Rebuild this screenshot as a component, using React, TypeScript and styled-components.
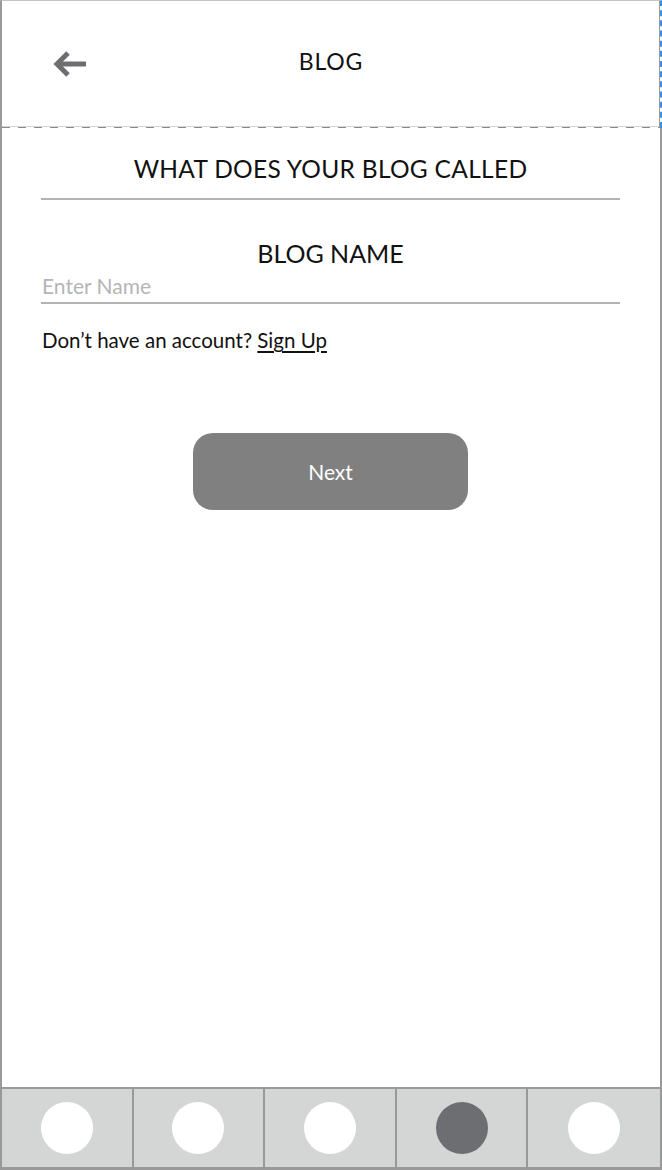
import styled, { createGlobalStyle } from "styled-components";

const GlobalStyle = createGlobalStyle`
  html, body {
    margin: 0;
    padding: 0;
    background: #ffffff;
  }
  * {
    box-sizing: border-box;
  }
`;

const Screen = styled.div`
  width: 662px;
  height: 1170px;
  display: flex;
  flex-direction: column;
  font-family: Lato, "Open Sans", sans-serif;
  color: #111111;
  background: #ffffff;
  overflow: hidden;
`;

const Header = styled.header`
  height: 128px;
  flex-shrink: 0;
  display: flex;
  align-items: center;
  justify-content: center;
  position: relative;
  border-top: 1px solid #c4c4c4;
  border-left: 2px solid #9a9a9a;
  border-right: 2px dashed #3a8ee6;
  background-color: #ffffff;
  background-image: linear-gradient(#d6d6d6, #d6d6d6),
    repeating-linear-gradient(to right, #8a8a8a 0 8px, transparent 8px 16px);
  background-size: 100% 1px, 100% 1px;
  background-position: left calc(100% - 1px), left bottom;
  background-repeat: no-repeat;
  box-shadow: inset -1px 0 0 #9a9a9a;
`;

const BackButton = styled.button`
  position: absolute;
  left: 49px;
  top: 47px;
  width: 38px;
  height: 32px;
  padding: 0;
  border: none;
  background: none;
  display: flex;
  align-items: center;
  justify-content: center;
`;

const Title = styled.h1`
  margin: 0;
  font-size: 23px;
  font-weight: 400;
  letter-spacing: 0.8px;
  transform: translateY(-4px);
`;

const Body = styled.main`
  flex: 1;
  display: flex;
  flex-direction: column;
  padding: 26px 40px 0 39px;
  border-left: 2px solid #9a9a9a;
  border-right: 2px solid #9a9a9a;
`;

const Question = styled.h2`
  margin: 0;
  padding-bottom: 15px;
  text-align: center;
  font-size: 24.5px;
  font-weight: 400;
  letter-spacing: 0.3px;
  border-bottom: 2px solid #b3b3b3;
`;

const FieldLabel = styled.h3`
  margin: 38px 0 0;
  text-align: center;
  font-size: 25px;
  font-weight: 400;
  line-height: 30px;
`;

const NameInput = styled.input`
  display: block;
  width: 100%;
  margin-top: 5px;
  padding: 0 0 4px 1px;
  border: none;
  border-bottom: 2px solid #b3b3b3;
  outline: none;
  background: transparent;
  font-family: inherit;
  font-size: 21px;
  color: #111111;
  &::placeholder {
    color: #b5b5b5;
  }
`;

const AccountLine = styled.p`
  margin: 24px 0 0 1px;
  font-size: 20.5px;
`;

const SignUp = styled.a`
  color: #111111;
  text-decoration: underline;
  text-underline-offset: 3px;
`;

const NextButton = styled.button`
  align-self: center;
  margin-top: 81px;
  width: 275px;
  height: 77px;
  border: none;
  border-radius: 20px;
  background: #808080;
  color: #ffffff;
  font-family: inherit;
  font-size: 21px;
`;

const TabBar = styled.nav`
  height: 83px;
  flex-shrink: 0;
  display: grid;
  grid-template-columns: repeat(5, 1fr);
  background: #d4d5d5;
  border: 2px solid #999999;
  border-bottom-width: 3px;
`;

const Tab = styled.div<{ $last?: boolean }>`
  display: flex;
  align-items: center;
  justify-content: center;
  border-right: ${(p) => (p.$last ? "none" : "2px solid #999999")};
`;

const Dot = styled.span<{ $active?: boolean }>`
  width: 52px;
  height: 52px;
  border-radius: 50%;
  background: ${(p) => (p.$active ? "#6d6e71" : "#ffffff")};
`;

const tabs = [false, false, false, true, false];

export default function App() {
  return (
    <>
      <GlobalStyle />
      <Screen>
        <Header>
          <BackButton aria-label="Back">
            <svg width="34" height="28" viewBox="0 0 34 28">
              <path
                d="M15 3 L4 14 L15 25"
                fill="none"
                stroke="#6d6e71"
                strokeWidth="5"
              />
              <path d="M5 14 H33" stroke="#6d6e71" strokeWidth="5" />
            </svg>
          </BackButton>
          <Title>BLOG</Title>
        </Header>
        <Body>
          <Question>WHAT DOES YOUR BLOG CALLED</Question>
          <FieldLabel>BLOG NAME</FieldLabel>
          <NameInput placeholder="Enter Name" />
          <AccountLine>
            Don’t have an account? <SignUp href="#">Sign Up</SignUp>
          </AccountLine>
          <NextButton>Next</NextButton>
        </Body>
        <TabBar>
          {tabs.map((active, i) => (
            <Tab key={i} $last={i === tabs.length - 1}>
              <Dot $active={active} />
            </Tab>
          ))}
        </TabBar>
      </Screen>
    </>
  );
}
